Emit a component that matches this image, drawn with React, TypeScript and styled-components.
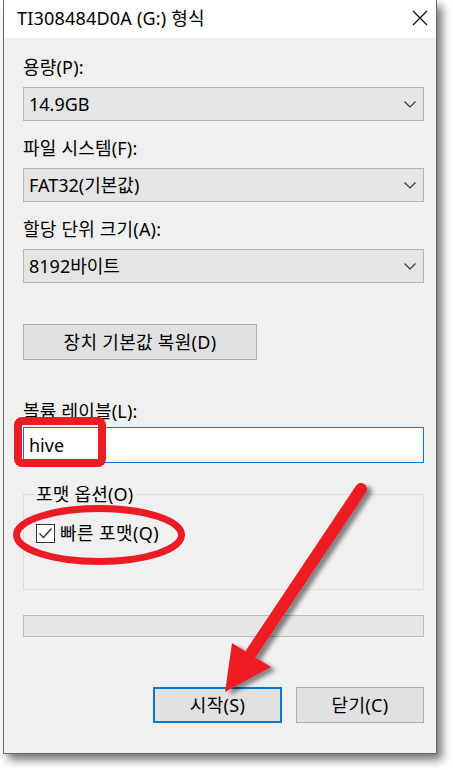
import React from "react";
import styled, { createGlobalStyle } from "styled-components";

const Global = createGlobalStyle`
  html, body { margin: 0; padding: 0; background: #ffffff; }
  body {
    font-family: "Noto Sans", "Noto Sans CJK KR", sans-serif;
    color: #000;
  }
  * { box-sizing: border-box; }
`;

const Page = styled.div`
  position: relative;
  width: 453px;
  height: 770px;
  overflow: hidden;
  background: #ffffff;
`;

const Window = styled.div`
  width: 434px;
  margin-left: 3px;
  border: 1px solid #6a6a6a;
  border-top: none;
  background: #f0f0f0;
  box-shadow: 5px 6px 9px rgba(0, 0, 0, 0.55);
`;

const TitleBar = styled.div`
  height: 38px;
  background: #ffffff;
  display: flex;
  align-items: center;
  justify-content: space-between;
  padding: 0 8px 2px 13px;
`;

const TitleText = styled.span`
  font-size: 18px;
  line-height: 20px;
  letter-spacing: 0.2px;
  color: #000;
`;

const Body = styled.div`
  display: flex;
  flex-direction: column;
  padding: 0 12px 30px 19px;
  font-size: 18px;
`;

const Label = styled.div<{ $top: number }>`
  margin-top: ${(p) => p.$top}px;
  line-height: 20px;
  color: #000;
  letter-spacing: 0.2px;
`;

const Combo = styled.div`
  margin-top: 10px;
  height: 34px;
  background: #e5e5e5;
  border: 1px solid #b4b4b4;
  display: flex;
  align-items: center;
  justify-content: space-between;
  padding: 0 7px 0 5px;
  line-height: 20px;
`;

const Button = styled.div<{ $width: number; $primary?: boolean }>`
  width: ${(p) => p.$width}px;
  height: 36px;
  display: flex;
  align-items: center;
  justify-content: center;
  background: #e1e1e1;
  border: ${(p) => (p.$primary ? "2px solid #0078d7" : "1px solid #adadad")};
  line-height: 20px;
  color: #000;
  letter-spacing: 0.3px;
`;

const RestoreButton = styled(Button)`
  margin-top: 41px;
`;

const TextInput = styled.input`
  margin-top: 6px;
  height: 36px;
  width: 100%;
  background: #fff;
  border: 1px solid #0078d7;
  padding: 0 5px;
  font-family: "Noto Sans", "Noto Sans CJK KR", sans-serif;
  font-size: 18px;
  color: #000;
  outline: none;
`;

const Group = styled.fieldset`
  margin: 21px 0 0 0;
  min-width: 0;
  border: 1px solid #dcdcdc;
  padding: 19px 12px 46px 12px;
`;

const Legend = styled.legend`
  padding: 0 3px;
  margin-left: -3px;
  line-height: 20px;
  letter-spacing: 0.2px;
`;

const CheckRow = styled.label`
  display: flex;
  align-items: center;
  gap: 5px;
  line-height: 20px;
  letter-spacing: 0.4px;
`;

const CheckBox = styled.span`
  width: 19px;
  height: 19px;
  border: 1px solid #333;
  background: #fff;
  display: flex;
  align-items: center;
  justify-content: center;
`;

const Progress = styled.div`
  margin-top: 25px;
  height: 22px;
  background: #e6e6e6;
  border: 1px solid #bcbcbc;
`;

const ButtonRow = styled.div`
  margin-top: 50px;
  display: flex;
  justify-content: flex-end;
  gap: 14px;
`;

const Overlay = styled.svg`
  position: absolute;
  left: 0;
  top: 0;
  pointer-events: none;
`;

const Chevron = () => (
  <svg width="12" height="7" viewBox="0 0 12 7">
    <path d="M0.5 0.5 L6 6 L11.5 0.5" fill="none" stroke="#333" strokeWidth="1.1" />
  </svg>
);

const CloseIcon = () => (
  <svg width="16" height="16" viewBox="0 0 16 16">
    <path d="M1 1 L15 15 M15 1 L1 15" stroke="#111" strokeWidth="1.3" fill="none" />
  </svg>
);

const CheckMark = () => (
  <svg width="15" height="15" viewBox="0 0 15 15">
    <path d="M1.5 7.5 L5.5 11.5 L13.5 2.5" fill="none" stroke="#333" strokeWidth="1.4" />
  </svg>
);

export default function App() {
  return (
    <>
      <Global />
      <Page>
        <Window>
          <TitleBar>
            <TitleText>TI308484D0A (G:) 형식</TitleText>
            <CloseIcon />
          </TitleBar>
          <Body>
            <Label $top={19}>용량(P):</Label>
            <Combo>
              <span>14.9GB</span>
              <Chevron />
            </Combo>
            <Label $top={17}>파일 시스템(F):</Label>
            <Combo>
              <span>FAT32(기본값)</span>
              <Chevron />
            </Combo>
            <Label $top={17}>할당 단위 크기(A):</Label>
            <Combo>
              <span>8192바이트</span>
              <Chevron />
            </Combo>
            <RestoreButton $width={234}>장치 기본값 복원(D)</RestoreButton>
            <Label $top={41}>볼륨 레이블(L):</Label>
            <TextInput readOnly value="hive" />
            <Group>
              <Legend>포맷 옵션(O)</Legend>
              <CheckRow>
                <CheckBox>
                  <CheckMark />
                </CheckBox>
                <span>빠른 포맷(Q)</span>
              </CheckRow>
            </Group>
            <Progress />
            <ButtonRow>
              <Button $width={129} $primary>
                시작(S)
              </Button>
              <Button $width={128}>닫기(C)</Button>
            </ButtonRow>
          </Body>
        </Window>
        <Overlay width="453" height="770" viewBox="0 0 453 770">
          <defs>
            <filter id="arrowShadow" x="-20%" y="-20%" width="140%" height="140%">
              <feDropShadow dx="5" dy="3" stdDeviation="2" floodColor="#000" floodOpacity="0.45" />
            </filter>
          </defs>
          <rect x="18" y="421" width="84" height="42" rx="4" fill="none" stroke="#ec1c24" strokeWidth="8" />
          <ellipse cx="99" cy="535" rx="82.5" ry="26.5" fill="none" stroke="#ec1c24" strokeWidth="7" />
          <g filter="url(#arrowShadow)">
            <line x1="361" y1="489" x2="252" y2="652" stroke="#ec1c24" strokeWidth="12" strokeLinecap="round" />
            <polygon points="225,692 271,667 232,643" fill="#ec1c24" />
          </g>
        </Overlay>
      </Page>
    </>
  );
}
